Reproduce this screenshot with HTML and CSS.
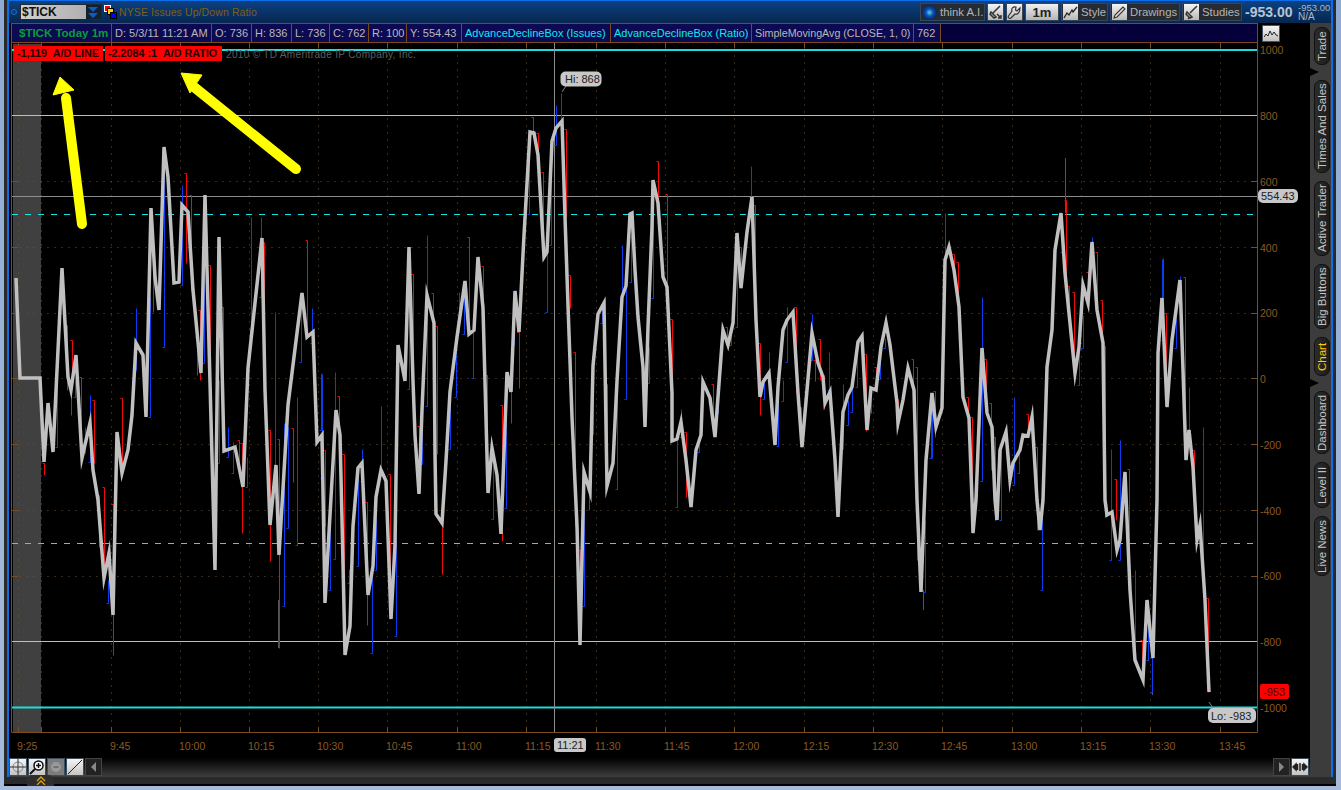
FILE: index.html
```html
<html>
    <head>
        <title>$TICK chart</title>
        <link rel="stylesheet" href="styles.css">
    </head>
    <body>
        <div class="shell">
            <div class="window">
                <div class="header">
                    <span class="dot"></span>
                    <div class="symbol">
                        <span class="symbol-name">$TICK</span>
                        <span class="symbol-arrow">
                            <svg width="14" height="13" viewBox="0 0 14 13"><path d="M2 1h10L7 6zM2 7h10l-5 5z" fill="#0a5cc8"/></svg>
                        </span>
                    </div>
                    <svg class="link-icon" width="13" height="14" viewBox="0 0 13 14">
                        <rect x="0.5" y="0.5" width="6" height="6" fill="#f00" stroke="#fff"/>
                        <rect x="3.5" y="3.5" width="6" height="6" fill="#fc0" stroke="#000"/>
                        <rect x="6.5" y="7.5" width="6" height="6" fill="#00f" stroke="#000"/>
                    </svg>
                    <span class="description">NYSE Issues Up/Down Ratio</span>
                    <div class="tools">
                        <div class="tool w65">
                            <span class="ball"></span>
                            think A.I.
                        </div>
                        <div class="tool tool-icon">
                            <span class="icon-box">
                                <svg width="15" height="15" viewBox="0 0 15 15"><path d="M12 1 5 8M3 7l-1 2 4 4 2-1zM9 9l4 4M10 13h3v-3" fill="none" stroke="#333" stroke-width="1.5"/></svg>
                            </span>
                        </div>
                        <div class="tool tool-icon">
                            <span class="icon-box">
                                <svg width="15" height="15" viewBox="0 0 15 15"><path d="M13 3 10 6 8.500 5 9 2C6 1 4 4 5 6L1.500 11c-1 2 1 3 2.500 2L8 9c3 1 5-2 5-6z" fill="none" stroke="#333" stroke-width="1.200"/></svg>
                            </span>
                        </div>
                        <div class="tool-period">1m</div>
                        <div class="tool w47">
                            <span class="icon-box">
                                <svg width="15" height="15" viewBox="0 0 15 15"><path d="M1 13 4 8l2 2 3-5 1 2 4-5" fill="none" stroke="#222" stroke-width="1.300"/></svg>
                            </span>
                            Style
                        </div>
                        <div class="tool w70">
                            <span class="icon-box">
                                <svg width="15" height="15" viewBox="0 0 15 15"><path d="M11 2 3 10l-1 3 3-1 8-8z" fill="#ddd" stroke="#333" stroke-width="1.100"/></svg>
                            </span>
                            Drawings
                        </div>
                        <div class="tool w60">
                            <span class="icon-box">
                                <svg width="15" height="15" viewBox="0 0 15 15"><path d="M13 1 6 8M3 7l-1 2 4 4 2-1zM5 13l-1 1" fill="none" stroke="#333" stroke-width="1.500"/></svg>
                            </span>
                            Studies
                        </div>
                    </div>
                    <div class="last-price">-953.00</div>
                    <div class="price-side">
                        <span>-953.00</span>
                        <span class="na">N/A</span>
                    </div>
                </div>

                <div class="main">
                    <div class="pane">
                        <div class="info">
                            <div class="cell cell-title">$TICK Today 1m</div>
                            <div class="cell cell-date">D: 5/3/11 11:21 AM</div>
                            <div class="cell w40">O: 736</div>
                            <div class="cell w40">H: 836</div>
                            <div class="cell w38">L: 736</div>
                            <div class="cell w39">C: 762</div>
                            <div class="cell w38">R: 100</div>
                            <div class="cell w55">Y: 554.43</div>
                            <div class="cell cyan w149">AdvanceDeclineBox (Issues)</div>
                            <div class="cell cyan w141">AdvanceDeclineBox (Ratio)</div>
                            <div class="cell tight w162">SimpleMovingAvg (CLOSE, 1, 0)</div>
                            <div class="cell w27">762</div>
                            <div class="cell-fill"></div>
                            <div class="scale-toggle">
                                <svg width="14" height="12" viewBox="0 0 14 12"><path d="M0 9l2-3 2 2 2-5 2 4 2-3 2 3 2 1" fill="none" stroke="#222"/></svg>
                            </div>
                        </div>

                        <div class="chart">
                            <svg class="plot" width="1301" height="715" viewBox="9 43 1301 715">
                                <rect class="premarket" x="13" y="44" width="28" height="688"/>

                                <!-- dotted grid -->
                                <path class="grid" d="M12 181H1257M12 247H1257M12 313H1257M12 378H1257M12 444H1257M12 510H1257M12 576H1257"/>
                                <path class="grid" d="M18 48V727M41 48V727M111 48V727M180 48V727M249 48V727M318 48V727M387 48V727M457 48V727M526 48V727M596 48V727M665 48V727M734 48V727M804 48V727M873 48V727M942 48V727M1012 48V727M1081 48V727M1150 48V727M1220 48V727"/>

                                <!-- plot frame and ticks -->
                                <path class="frame" d="M11.500 43V732.500H1257.500V43"/>
                                <path class="frame ticks" d="M18 43V48M41 43V48M111 43V48M180 43V48M249 43V48M318 43V48M387 43V48M457 43V48M526 43V48M596 43V48M665 43V48M734 43V48M804 43V48M873 43V48M942 43V48M1012 43V48M1081 43V48M1150 43V48M1220 43V48"/>
                                <path class="frame ticks" d="M18 727V732M41 727V732M111 727V732M180 727V732M249 727V732M318 727V732M387 727V732M457 727V732M526 727V732M596 727V732M665 727V732M734 727V732M804 727V732M873 727V732M942 727V732M1012 727V732M1081 727V732M1150 727V732M1220 727V732"/>
                                <path class="frame" d="M12 115.500H18M12 181.500H18M12 247.500H18M12 313.500H18M12 378.500H18M12 444.500H18M12 510.500H18M12 576.500H18M12 641.500H18M1251 115.500H1257M1251 181.500H1257M1251 247.500H1257M1251 313.500H1257M1251 378.500H1257M1251 444.500H1257M1251 510.500H1257M1251 576.500H1257M1251 641.500H1257"/>

                                <!-- levels -->
                                <path class="level" d="M12 115.500H1257M12 641.500H1257"/>
                                <path class="level-dash" d="M12 214.500H1257M12 543.500H1257"/>
                                <path class="level-thick" d="M12 50H1257M12 707.500H1257"/>
                                <path class="price-line" d="M12 196.500H1257"/>
                                <path class="price-line" d="M554.500 43V732"/>

                                <!-- wicks -->
                                <path class="wick" d="M113 616V655M1065 158V213M1152 660V695M923 590V610M278 600V648"/>

                                <!-- bars -->
                                <path class="bar-blue" d="M136 308V370h-2M150 297V417h-2M164 157V347h-2M182 185V285h-2M204 195V363h-2M251 217V330h-2M261 217V297h-2M275 312V497h-2M312 308V343h-2M301 303V362h-2M321 373V430h-2M57 380V447h-2M75 380V397h-2M85 427V453h-2M90 395V462h-2M108 580V603h-2M132 380V413h-2M219 380V463h-2M228 427V457h-2M233 442V473h-2M247 457V487h-2M284 423V606h-2M288 427V528h-2M297 397V545h-2"/>
                                <path class="bar-blue" d="M322 374V478h-2M335 372V559h-2M330 519V590h-2M349 569V583h-2M358 468V566h-2M362 449V481h-2M376 519V570h-2M372 574V653h-2M381 406V472h-2M396 536V636h-2M409 297V389h-2M422 417V464h-2M427 235V406h-2M456 345V397h-2M450 395V449h-2M464 285V334h-2M459 292V332h-2M473 332V378h-2M493 465V519h-2M506 377V508h-2M514 290V345h-2M529 132V214h-2M547 252V312h-2M551 141V245h-2M556 105V145h-2M561 93V123h-2M584 475V606h-2M593 363V434h-2M602 305V323h-2M617 381V489h-2M622 245V297h-2M626 285V399h-2"/>
                                <path class="bar-blue" d="M631 235V282h-2M649 347V383h-2M653 193V298h-2M677 440V507h-2M681 409V437h-2M701 396V421h-2M699 438V452h-2M718 387V413h-2M731 330V345h-2M737 260V327h-2M747 220V233h-2M751 166V197h-2M764 377V399h-2M769 352V373h-2M778 387V446h-2M783 380V401h-2M787 307V362h-2M812 314V360h-2M829 352V390h-2M843 384V449h-2M848 400V425h-2M852 388V412h-2M857 340V387h-2M880 360V379h-2M885 338V348h-2M925 520V592h-2M932 393V458h-2M945 213V260h-2"/>
                                <path class="bar-blue" d="M982 297V481h-2M1014 397V485h-2M1019 450V473h-2M1062 222V252h-2M1079 347V385h-2M1083 315V348h-2M1092 237V242h-2M1111 449V560h-2M1162 259V298h-2M1176 318V348h-2M1180 276V303h-2M1189 387V430h-2M1203 427V560h-2M1001 450V520h-2M931 417V458h-2M1042 500V590h-2M1135 570V650h-2M1148 600V660h-2M1152 620V692h-2M1120 440V560h-2M1163 258V340h-2"/>
                                <path class="bar-red" d="M184 173h2V263M189 195h2V290M151 233h2V312M208 265h2V390M221 307h2V390M195 337h2V375M198 310h2V380M262 242h2V390M305 240h2V337M65 325h2V390M70 340h2V387M79 377h2V450M42 463h2V475M69 380h2V415M92 400h2V463M102 487h2V580M97 495h2V547M120 398h2V470M111 504h2V655M143 380h2V393M237 440h2V465M240 443h2V533M268 430h2V561M277 439h2V648M291 428h2V482"/>
                                <path class="bar-red" d="M323 450h2V526M337 396h2V435M342 454h2V599M365 502h2V625M388 474h2V619M411 274h2V381M417 426h2V490M431 293h2V323M435 326h2V454M440 523h2V574M467 237h2V330M481 266h2V308M485 375h2V490M500 405h2V541M509 388h2V423M517 332h2V388M531 117h2V132M536 133h2V155M541 172h2V254M564 129h2V217M568 275h2V308M573 352h2V526M578 550h2V645M587 490h2V510M605 384h2V486"/>
                                <path class="bar-red" d="M656 161h2V203M665 194h2V288M670 319h2V440M684 432h2V497M711 384h2V428M725 327h2V345M739 247h2V288M753 205h2V320M758 343h2V415M794 307h2V393M799 407h2V447M818 339h2V380M813 360h2V381M822 375h2V409M864 354h2V431M869 387h2V413M874 367h2V390M886 332h2V345M896 399h2V423M911 359h2V388M915 367h2V560M933 391h2V437"/>
                                <path class="bar-red" d="M952 254h2V270M956 262h2V305M966 397h2V418M970 417h2V533M984 359h2V413M989 403h2V470M993 437h2V520M1026 414h2V435M1035 447h2V530M1064 200h2V280M1067 286h2V323M1072 292h2V377M1086 272h2V303M1095 252h2V310M1100 300h2V343M1103 346h2V517M1114 479h2V520M1127 469h2V570M1164 313h2V407M1183 277h2V460M1192 450h2V487M1206 598h2V692M1140 640h2V680"/>

                                <!-- moving average -->
                                <polyline class="sma" points="16,278 20,378 40,378 44,462 48,403 53,452 62,268 68,377 71,390 76,355 82,458 90,423 93,470 98,500 104,578 109,553 113,615 117,432 122,473 128,450 132,415 136,343 143,355 146,417 151,208 155,277 159,310 164,147 168,177 174,283 179,282 182,205 188,212 193,290 201,373 205,195 215,570 219,237 224,451 235,447 243,487 248,368 262,238 265,390 270,525 276,465 279,555 288,405 302,293 307,337 313,332 317,442 322,435 325,603 336,410 340,435 343,563 345,655 350,626 353,526 358,468 362,463 368,595 373,566 376,497 381,470 386,481 391,619 395,545 398,345 400,355 405,381 409,247 413,381 415,435 419,494 422,410 427,295 434,323 435,454 436,514 442,523 446,461 450,392 457,337 465,281 469,334 474,330 478,257 483,308 488,493 492,448 497,475 501,534 507,372 511,392 515,291 519,332 524,235 530,132 534,133 538,155 544,257 547,252 552,141 556,128 562,121 565,217 568,305 572,417 577,526 580,645 584,472 590,492 593,366 598,314 604,303 607,486 613,463 617,381 622,297 626,286 630,214 632,213 635,270 638,317 643,367 645,427 648,327 652,227 653,180 658,203 663,277 667,287 672,393 672,441 677,439 681,422 686,460 691,507 696,450 701,435 703,382 710,398 715,437 723,330 728,345 733,323 737,233 741,288 747,232 752,197 756,320 760,397 763,382 769,373 775,445 778,387 783,330 787,320 793,312 798,393 802,447 807,390 812,333 818,363 823,377 825,403 830,392 835,460 838,517 843,412 848,395 852,387 858,342 862,336 867,430 871,388 876,390 881,347 886,323 890,345 897,403 898,423 903,400 908,368 914,390 917,500 921,592 926,460 932,393 936,427 942,408 945,260 949,247 954,270 959,307 963,397 969,418 972,500 973,533 976,500 982,348 987,413 992,427 995,500 997,520 1000,450 1006,432 1010,480 1013,463 1020,450 1023,435 1028,436 1032,417 1037,500 1040,530 1043,500 1047,367 1052,330 1055,250 1061,213 1065,273 1070,323 1075,373 1079,347 1083,285 1088,303 1092,242 1097,310 1103,343 1105,500 1107,515 1112,512 1117,550 1120,540 1125,472 1130,590 1135,660 1143,680 1147,600 1153,658 1157,500 1158,353 1162,298 1167,407 1172,340 1180,280 1186,460 1189,430 1193,467 1197,540 1200,525 1205,600 1209,692"/>

                                <!-- annotation arrows -->
                                <path class="arrow" d="M82 224 66 98"/>
                                <path class="arrow-head" d="M60 77 74 90 53 95z"/>
                                <path class="arrow" d="M296 169 194 87"/>
                                <path class="arrow-head" d="M181 73 202 75 190 93z"/>

                                <!-- axis labels -->
                                <text class="axis" x="1260" y="54">1000</text>
                                <text class="axis" x="1260" y="120">800</text>
                                <text class="axis" x="1260" y="186">600</text>
                                <text class="axis" x="1260" y="252">400</text>
                                <text class="axis" x="1260" y="317">200</text>
                                <text class="axis" x="1260" y="383">0</text>
                                <text class="axis" x="1260" y="449">-200</text>
                                <text class="axis" x="1260" y="515">-400</text>
                                <text class="axis" x="1260" y="580">-600</text>
                                <text class="axis" x="1260" y="646">-800</text>
                                <text class="axis" x="1260" y="712">-1000</text>
                                <text class="axis" x="17" y="750">9:25</text>
                                <text class="axis" x="110" y="750">9:45</text>
                                <text class="axis" x="179" y="750">10:00</text>
                                <text class="axis" x="248" y="750">10:15</text>
                                <text class="axis" x="317" y="750">10:30</text>
                                <text class="axis" x="386" y="750">10:45</text>
                                <text class="axis" x="456" y="750">11:00</text>
                                <text class="axis" x="525" y="750">11:15</text>
                                <text class="axis" x="595" y="750">11:30</text>
                                <text class="axis" x="664" y="750">11:45</text>
                                <text class="axis" x="733" y="750">12:00</text>
                                <text class="axis" x="803" y="750">12:15</text>
                                <text class="axis" x="872" y="750">12:30</text>
                                <text class="axis" x="941" y="750">12:45</text>
                                <text class="axis" x="1011" y="750">13:00</text>
                                <text class="axis" x="1080" y="750">13:15</text>
                                <text class="axis" x="1149" y="750">13:30</text>
                                <text class="axis" x="1219" y="750">13:45</text>

                                <!-- bubbles -->
                                <path class="pointer" d="M566 86 562 92"/>
                                <rect class="bubble" x="560.500" y="71.500" width="41" height="15" rx="5"/>
                                <text class="bubble-text" x="565" y="83">Hi: 868</text>
                                <path class="pointer" d="M1209 702 1213 708"/>
                                <rect class="bubble" x="1208" y="708" width="48" height="15" rx="5"/>
                                <text class="bubble-text" x="1211" y="720">Lo: -983</text>
                                <rect class="bubble" x="1258" y="189" width="40" height="14" rx="5"/>
                                <text class="bubble-text" x="1261" y="200">554.43</text>
                                <rect class="bubble" x="554" y="738" width="32" height="14" rx="3"/>
                                <text class="bubble-text" x="557" y="749">11:21</text>
                                <rect class="bubble-red" x="1260" y="684" width="29" height="15" rx="2"/>
                                <text class="bubble-text dark-red" x="1263" y="696">-953</text>
                            </svg>

                            <div class="legend">
                                <span class="flag w89">-1,119 &nbsp;A/D LINE</span>
                                <span class="flag w117">-2.2084 :1 &nbsp;A/D RATIO</span>
                                <span class="copyright">2010 © TD Ameritrade IP Company, Inc.</span>
                            </div>
                        </div>

                        <div class="bottom-bar">
                            <div class="bottom-group">
                                <span class="mini">
                                    <svg width="16" height="16" viewBox="0 0 16 16"><circle cx="8" cy="8" r="5" fill="none" stroke="#888"/><path d="M0 8h16M8 0v16" stroke="#333"/></svg>
                                </span>
                                <span class="mini">
                                    <svg width="16" height="16" viewBox="0 0 16 16"><circle cx="9.500" cy="6.500" r="4.500" fill="#fff" stroke="#111" stroke-width="1.500"/><path d="M7 6.500h5M9.500 4v5" stroke="#111" stroke-width="1.500"/><path d="M6 10 1 15" stroke="#111" stroke-width="2"/></svg>
                                </span>
                                <span class="mini mini-off">
                                    <svg width="16" height="16" viewBox="0 0 16 16"><circle cx="8" cy="8" r="5" fill="#999"/><path d="M5.500 8h5" stroke="#666" stroke-width="1.500"/></svg>
                                </span>
                                <span class="mini">
                                    <svg width="16" height="16" viewBox="0 0 16 16"><path d="M1 15 15 1" stroke="#222"/></svg>
                                </span>
                                <span class="nudge"><svg width="6" height="10" viewBox="0 0 6 10"><path d="M5 0v10L0 5z" fill="#888"/></svg></span>
                            </div>
                            <div class="bottom-group">
                                <span class="nudge"><svg width="6" height="10" viewBox="0 0 6 10"><path d="M0 0v10l5-5z" fill="#888"/></svg></span>
                                <span class="mini">
                                    <svg width="16" height="16" viewBox="0 0 16 16"><path d="M1 8l3-3v6zM15 8l-3-3v6zM5.500 5v6M8 4v8M10.500 5v6" fill="#222" stroke="#222" stroke-width="1.500"/></svg>
                                </span>
                            </div>
                        </div>
                    </div>

                    <div class="tabs">
                        <div class="tab h38">Trade</div>
                        <div class="notch"></div>
                        <div class="tab h93">Times And Sales</div>
                        <div class="tab h75">Active Trader</div>
                        <div class="tab h65">Big Buttons</div>
                        <div class="tab tab-active h39">Chart</div>
                        <div class="notch"></div>
                        <div class="tab h63">Dashboard</div>
                        <div class="tab h46">Level II</div>
                        <div class="tab h60">Live News</div>
                    </div>
                </div>
            </div>
            <div class="drawer">
                <svg width="10" height="9" viewBox="0 0 10 9"><path d="M1 5 5 1l4 4M1 9l4-4 4 4" fill="none" stroke="#e0a010" stroke-width="1.300"/></svg>
            </div>
        </div>
    </body>
</html>
```

FILE: styles.css
```css
* {
    box-sizing: border-box;
}
html, body {
    height: 790px;
    overflow: hidden;
}
body {
    margin: 0;
    padding-left: 4px;
    background: linear-gradient(#8fabd3, #a7bcdc);
    font-family: "Liberation Sans", Arial, sans-serif;
    font-size: 11px;
}
.shell {
    position: relative;
    width: 1332px;
    height: 786px;
    padding: 0 3px 7px;
    background: #2a2a2a;
    border-bottom: 2px solid #000;
}
.window {
    width: 1326px;
    height: 777px;
    border: 2px solid #0a6ee8;
    border-top-width: 1px;
    display: flex;
    flex-direction: column;
    background: #000;
}

/* header */
.header {
    height: 22px;
    flex: none;
    display: flex;
    align-items: center;
    padding-left: 1px;
    background: linear-gradient(#0b4283, #07264f);
}
.dot {
    width: 6px;
    height: 6px;
    margin: 0 3px 0 1px;
    border-radius: 50%;
    border: 1px solid #1a6fc0;
    background: #0a3c78;
}
.symbol {
    width: 82px;
    height: 16px;
    display: flex;
    border: 1px solid #1c2a3c;
    background: linear-gradient(90deg, #d0d0d0, #a8a8a8);
}
.symbol-name {
    flex: 1;
    padding-left: 1px;
    font-size: 12px;
    font-weight: bold;
    line-height: 14px;
    color: #111;
}
.symbol-arrow {
    width: 15px;
    background: #14202e;
}
.symbol-arrow svg {
    display: block;
    margin-top: 1px;
}
.link-icon {
    margin-left: 2px;
}
.description {
    margin-left: 2px;
    color: #7f5f14;
    font-size: 10.500px;
    letter-spacing: 0.1px;
}
.tools {
    margin-left: auto;
    display: flex;
    gap: 2px;
}
.tool {
    height: 18px;
    padding: 0 0 0 1px;
    display: flex;
    align-items: center;
    gap: 3px;
    background: #262b33;
    border: 1px solid #3a4654;
    color: #b4b4b4;
    font-size: 11.300px;
    white-space: nowrap;
}
.tool-icon {
    width: 17px;
    padding: 0;
}
.w47 { width: 47px; }
.w60 { width: 60px; }
.w65 { width: 65px; }
.w70 { width: 70px; }
.icon-box {
    width: 15px;
    height: 16px;
    flex: none;
    display: flex;
    align-items: center;
    justify-content: center;
    background: linear-gradient(#f4f4f4, #b8b8b8);
}
.ball {
    width: 15px;
    height: 15px;
    flex: none;
    border-radius: 50%;
    background: radial-gradient(circle at 50% 50%, #5ad0e8 0, #0a50b0 35%, #06205a 75%, #8a9ab0 100%);
}
.tool-period {
    width: 34px;
    height: 18px;
    text-align: center;
    font-size: 13px;
    font-weight: bold;
    line-height: 17px;
    color: #222;
    background: linear-gradient(#f0f0f0, #b4b4b4);
    border: 1px solid #3a4654;
}
.last-price {
    margin-left: 3px;
    width: 53px;
    font-size: 14px;
    font-weight: bold;
    color: #b8c4d0;
}
.price-side {
    width: 33px;
    display: flex;
    flex-direction: column;
    font-size: 9.500px;
    line-height: 9px;
    color: #a8b8c8;
}
.na {
    font-size: 10px;
}

.main {
    flex: 1;
    display: flex;
}
.pane {
    width: 1301px;
    display: flex;
    flex-direction: column;
}

/* study line */
.info {
    height: 20px;
    flex: none;
    display: flex;
    margin-left: 2px;
    background: #000;
}
.cell {
    height: 20px;
    padding-left: 3px;
    border: 1px solid #7a4a1c;
    border-right-width: 0;
    line-height: 18px;
    white-space: nowrap;
    overflow: hidden;
    color: #b8b8b8;
    background: #0c0a52;
    font-size: 11px;
}
.tight {
    font-size: 10.700px;
}
.cell-title {
    width: 100px;
    padding-left: 7px;
    font-weight: bold;
    color: #0a9c3c;
    font-size: 11.500px;
}
.cell-date {
    width: 100px;
}
.w27 { width: 27px; }
.w38 { width: 38px; }
.w39 { width: 39px; }
.w40 { width: 40px; }
.w55 { width: 55px; }
.w141 { width: 141px; }
.w149 { width: 149px; }
.w162 { width: 162px; }
.cyan {
    color: #0fe8f0;
}
.cell-fill {
    width: 318px;
    border: 1px solid #7a4a1c;
    background: #05003a;
}
.scale-toggle {
    width: 18px;
    height: 17px;
    margin: 2px 0 0 4px;
    display: flex;
    align-items: center;
    justify-content: center;
    border: 1px solid #445566;
    background: linear-gradient(#f4f4f4, #c0c0c0);
}

/* chart */
.chart {
    position: relative;
    height: 715px;
    flex: none;
}
.plot {
    display: block;
}
.premarket {
    fill: #404040;
}
.grid {
    fill: none;
    stroke: #6e5434;
    stroke-dasharray: 1 6;
    transform: translate(0.5px, 0.5px);
}
.frame {
    fill: none;
    stroke: #7a4d1e;
}
.ticks {
    transform: translateX(0.5px);
}
.level {
    fill: none;
    stroke: #5fe6e6;
}
.level-dash {
    fill: none;
    stroke: #10e8e8;
    stroke-dasharray: 6 7;
}
.level-thick {
    fill: none;
    stroke: #1cdcdc;
    stroke-width: 2;
}
.price-line {
    fill: none;
    stroke: #8c8c8c;
}
.wick {
    fill: none;
    stroke: #555;
    transform: translateX(0.5px);
}
.bar-blue {
    fill: none;
    stroke: #0a3cf0;
    transform: translate(0.5px, 0.5px);
}
.bar-red {
    fill: none;
    stroke: #f00a0a;
    transform: translate(0.5px, 0.5px);
}
.sma {
    fill: none;
    stroke: #c0c0c0;
    stroke-width: 3.500;
    stroke-miterlimit: 8;
}
.arrow {
    fill: none;
    stroke: #ff0;
    stroke-width: 10;
    stroke-linecap: round;
}
.arrow-head {
    fill: #ff0;
    stroke: #ff0;
    stroke-width: 1;
}
.axis {
    font-size: 10.500px;
    fill: #8a5a20;
}
.pointer {
    fill: none;
    stroke: #808080;
}
.bubble {
    fill: #c8c8c8;
}
.bubble-red {
    fill: #f00;
}
.bubble-text {
    font-size: 11px;
    fill: #222;
}
.dark-red {
    fill: #500000;
}
.legend {
    position: absolute;
    top: 3px;
    left: 5px;
    display: flex;
    align-items: center;
    gap: 2px;
}
.flag {
    height: 15px;
    padding-left: 3px;
    background: #f00;
    color: #2a0000;
    font-size: 10.750px;
    font-weight: bold;
    line-height: 15px;
    white-space: nowrap;
}
.w89 { width: 89px; }
.w117 { width: 117px; }
.copyright {
    margin: 1px 0 0 2px;
    font-size: 10px;
    letter-spacing: 0.330px;
    color: #5e5e5e;
    white-space: nowrap;
}

/* bottom buttons */
.bottom-bar {
    height: 19px;
    flex: none;
    display: flex;
    justify-content: space-between;
    padding-right: 1px;
    background: linear-gradient(#000, #3e3e3e);
}
.bottom-group {
    display: flex;
    gap: 1px;
}
.mini {
    width: 18px;
    height: 18px;
    display: flex;
    align-items: center;
    justify-content: center;
    border: 1px solid #3a5060;
    background: linear-gradient(#f4f4f4, #c4c4c4);
}
.mini-off {
    background: #7c7c7c;
}
.nudge {
    width: 17px;
    height: 18px;
    display: flex;
    align-items: center;
    justify-content: center;
    border: 1px solid #444;
    background: #222;
}

/* right hand tabs */
.tabs {
    flex: 1;
    padding: 4px 1px 0 4px;
    display: flex;
    flex-direction: column;
    gap: 8px;
    background: #3c3c3c;
}
.tab {
    width: 16px;
    flex: none;
    border: 1px solid #111;
    border-radius: 7px;
    background: linear-gradient(90deg, #1c1c1c, #2c2c2c);
    color: #c4c4c4;
    font-size: 11.500px;
    line-height: 14px;
    text-align: center;
    writing-mode: vertical-rl;
    transform: rotate(180deg);
    white-space: nowrap;
}
.tab-active {
    color: #ffc800;
}
.h38 { height: 38px; }
.h39 { height: 39px; }
.h46 { height: 46px; }
.h60 { height: 60px; }
.h63 { height: 63px; }
.h65 { height: 65px; }
.h75 { height: 75px; }
.h93 { height: 93px; }
.notch {
    width: 0;
    height: 8px;
    flex: none;
    margin: -5px 0 -4px -4px;
    border-left: 9px solid #000;
    border-top: 4px solid transparent;
    border-bottom: 4px solid transparent;
}

.drawer {
    position: absolute;
    left: 23px;
    top: 775px;
    width: 27px;
    height: 11px;
    display: flex;
    align-items: center;
    justify-content: center;
    background: #2e2e2e;
    clip-path: polygon(4px 0, 23px 0, 27px 4px, 27px 11px, 0 11px, 0 4px);
}
```
